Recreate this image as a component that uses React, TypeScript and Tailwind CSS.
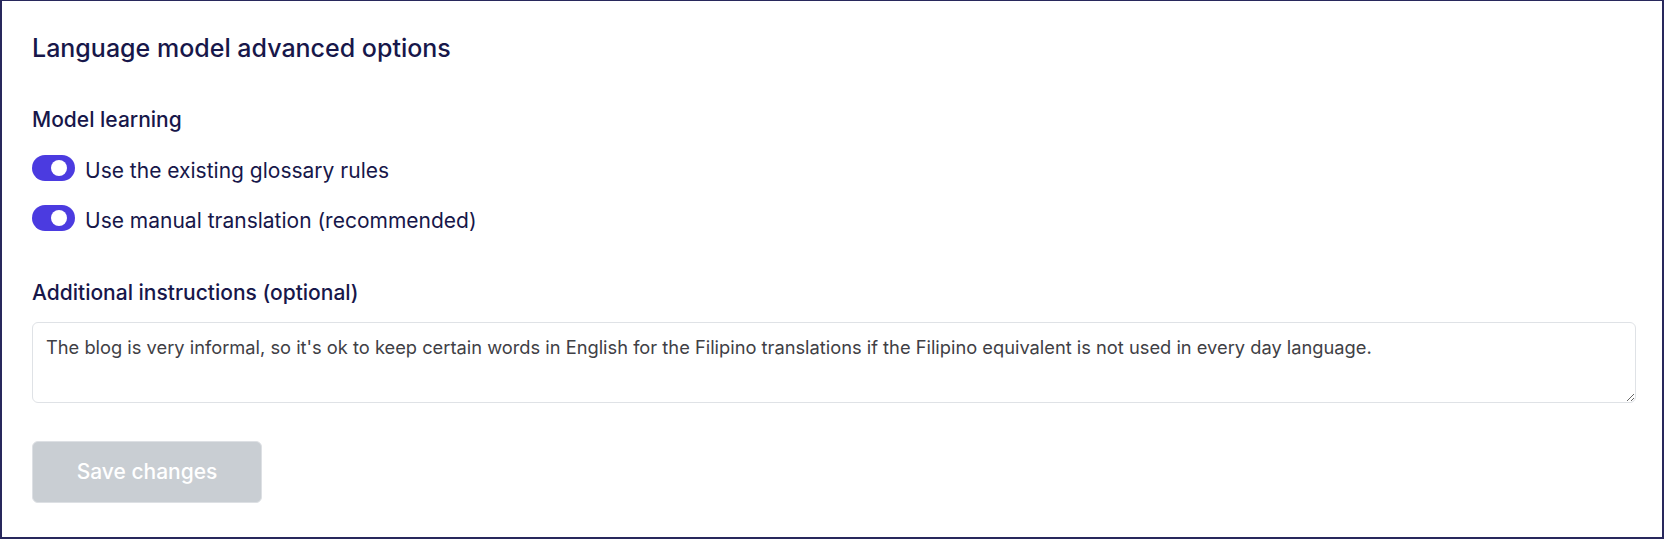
import { useState } from "react";

// Advanced options panel for the language model settings

interface ToggleRowProps {
  label: string;
  checked: boolean;
  onChange: (v: boolean) => void;
}

function ToggleRow({ label, checked, onChange }: ToggleRowProps) {
  return (
    <label className="flex items-start gap-[10px] cursor-pointer">
      <button
        type="button"
        role="switch"
        aria-checked={checked}
        onClick={() => onChange(!checked)}
        className={`relative shrink-0 w-[43px] h-[26px] rounded-full ${
          checked ? "bg-[#4b3be0]" : "bg-gray-300"
        }`}
      >
        <span
          className={`absolute top-[5px] w-[16px] h-[16px] rounded-full bg-white ${
            checked ? "left-[19px]" : "left-[5px]"
          }`}
        />
      </button>
      <span className="text-[21px] leading-[32px] text-[#17174a]">{label}</span>
    </label>
  );
}

export default function App() {
  const [glossary, setGlossary] = useState(true);
  const [manual, setManual] = useState(true);
  const [notes, setNotes] = useState(
    "The blog is very informal, so it's ok to keep certain words in English for the Filipino translations if the Filipino equivalent is not used in every day language."
  );

  return (
    <div
      className="h-[539px] bg-white border-2 border-t border-[#28285c] pl-[30px] pr-[26px] pt-[31px] text-[#17174a]"
      style={{ fontFamily: "Inter, 'Noto Sans', sans-serif" }}
    >
      <h1 className="text-[25px] leading-[32px] font-medium">Language model advanced options</h1>

      {/* Model learning */}
      <h2 className="mt-[42px] text-[21px] leading-[28px] font-medium">Model learning</h2>
      <div className="mt-[21px] flex flex-col gap-[18px]">
        <ToggleRow label="Use the existing glossary rules" checked={glossary} onChange={setGlossary} />
        <ToggleRow label="Use manual translation (recommended)" checked={manual} onChange={setManual} />
      </div>

      {/* Additional instructions */}
      <h2 className="mt-[42px] text-[21px] leading-[28px] font-medium">Additional instructions (optional)</h2>
      <textarea
        value={notes}
        onChange={(e) => setNotes(e.target.value)}
        className="mt-[15px] block w-full h-[81px] rounded-[6px] border border-[#dfe2e6] px-[13px] pt-[10px] text-[18.3px] leading-[28px] text-[#404045] outline-none"
      />

      <button
        type="button"
        disabled
        className="mt-[38px] w-[230px] h-[62px] rounded-[6px] bg-[#c9ced3] border border-[#dde0e4] text-white text-[21px] font-medium"
      >
        Save changes
      </button>
    </div>
  );
}
